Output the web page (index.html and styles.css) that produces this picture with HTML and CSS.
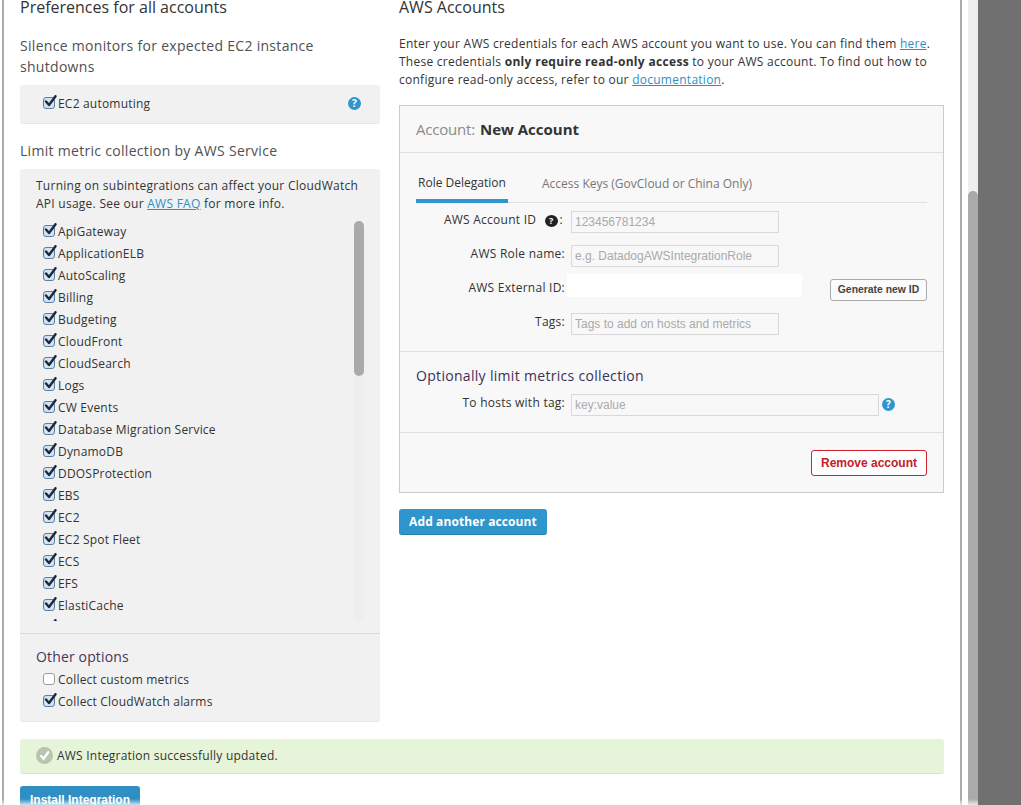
FILE: index.html
```html
<!DOCTYPE html>
<html lang="en">
<head>
<meta charset="utf-8">
<title>AWS Integration</title>
<link rel="stylesheet" href="styles.css">
</head>
<body>
<svg class="defs" width="0" height="0" aria-hidden="true">
  <symbol id="tick" viewBox="0 0 14 14">
    <path d="M3 6.5 L6 10 L12.5 1.2" fill="none" stroke="#1d2a3a" stroke-width="2.4" stroke-linecap="round" stroke-linejoin="round"/>
  </symbol>
</svg>
<div class="screen">
  <main class="modal">
    <div class="columns">
      <section class="left">
        <h2 class="title">Preferences for all accounts</h2>
        <h3 class="sub sub-first">Silence monitors for expected EC2 instance shutdowns</h3>
        <div class="panel mute">
          <label class="check"><span class="box on"><svg><use href="#tick"/></svg></span>EC2 automuting</label>
          <span class="help"><span>?</span></span>
        </div>
        <h3 class="sub sub-second">Limit metric collection by AWS Service</h3>
        <div class="panel services">
          <p class="note">Turning on subintegrations can affect your CloudWatch API usage. See our <a href="#">AWS FAQ</a> for more info.</p>
          <div class="scroller">
            <div class="list">
              <label class="check"><span class="box on"><svg><use href="#tick"/></svg></span>ApiGateway</label>
              <label class="check"><span class="box on"><svg><use href="#tick"/></svg></span>ApplicationELB</label>
              <label class="check"><span class="box on"><svg><use href="#tick"/></svg></span>AutoScaling</label>
              <label class="check"><span class="box on"><svg><use href="#tick"/></svg></span>Billing</label>
              <label class="check"><span class="box on"><svg><use href="#tick"/></svg></span>Budgeting</label>
              <label class="check"><span class="box on"><svg><use href="#tick"/></svg></span>CloudFront</label>
              <label class="check"><span class="box on"><svg><use href="#tick"/></svg></span>CloudSearch</label>
              <label class="check"><span class="box on"><svg><use href="#tick"/></svg></span>Logs</label>
              <label class="check"><span class="box on"><svg><use href="#tick"/></svg></span>CW Events</label>
              <label class="check"><span class="box on"><svg><use href="#tick"/></svg></span>Database Migration Service</label>
              <label class="check"><span class="box on"><svg><use href="#tick"/></svg></span>DynamoDB</label>
              <label class="check"><span class="box on"><svg><use href="#tick"/></svg></span>DDOSProtection</label>
              <label class="check"><span class="box on"><svg><use href="#tick"/></svg></span>EBS</label>
              <label class="check"><span class="box on"><svg><use href="#tick"/></svg></span>EC2</label>
              <label class="check"><span class="box on"><svg><use href="#tick"/></svg></span>EC2 Spot Fleet</label>
              <label class="check"><span class="box on"><svg><use href="#tick"/></svg></span>ECS</label>
              <label class="check"><span class="box on"><svg><use href="#tick"/></svg></span>EFS</label>
              <label class="check"><span class="box on"><svg><use href="#tick"/></svg></span>ElastiCache</label>
              <label class="check"><span class="box on"><svg><use href="#tick"/></svg></span>ELB</label>
            </div>
            <div class="inner-track"><div class="inner-thumb"></div></div>
          </div>
          <div class="other">
            <h4 class="other-title">Other options</h4>
            <label class="check"><span class="box"></span>Collect custom metrics</label>
            <label class="check"><span class="box on"><svg><use href="#tick"/></svg></span>Collect CloudWatch alarms</label>
          </div>
        </div>
      </section>
      <section class="right">
        <h2 class="title">AWS Accounts</h2>
        <p class="intro">Enter your AWS credentials for each AWS account you want to use. You can find them <a href="#">here</a>. These credentials <b>only require read-only access</b> to your AWS account. To find out how to configure read-only access, refer to our <a href="#">documentation</a>.</p>
        <div class="account">
          <header class="account-head"><span class="muted">Account:</span> <b>New Account</b></header>
          <div class="account-body">
            <nav class="tabs">
              <span class="tab active">Role Delegation</span>
              <span class="tab">Access Keys (GovCloud or China Only)</span>
            </nav>
            <div class="form">
              <div class="row row-id">
                <span class="lab">AWS Account ID <span class="q-dark">?</span>:</span>
                <input class="field" placeholder="123456781234">
              </div>
              <div class="row row-role">
                <span class="lab">AWS Role name:</span>
                <input class="field" placeholder="e.g. DatadogAWSIntegrationRole">
              </div>
              <div class="row row-ext">
                <span class="lab">AWS External ID:</span>
                <div class="blank"></div>
                <button class="btn-plain" type="button">Generate new ID</button>
              </div>
              <div class="row row-tags">
                <span class="lab">Tags:</span>
                <input class="field" placeholder="Tags to add on hosts and metrics">
              </div>
            </div>
          </div>
          <div class="limit">
            <h4 class="limit-title">Optionally limit metrics collection</h4>
            <div class="row">
              <span class="lab">To hosts with tag:</span>
              <input class="field wide" placeholder="key:value">
              <span class="help help-tag"><span>?</span></span>
            </div>
          </div>
          <div class="account-foot">
            <button class="btn-danger" type="button">Remove account</button>
          </div>
        </div>
        <button class="btn-primary add" type="button">Add another account</button>
      </section>
    </div>
    <div class="alert"><span class="ok"><svg viewBox="0 0 14 14"><path d="M3.5 7.5 L6 10.5 L11 3.5" fill="none" stroke="#fff" stroke-width="2.6" stroke-linecap="round"/></svg></span>AWS Integration successfully updated.</div>
    <button class="btn-install" type="button">Install Integration</button>
  </main>
  <div class="track"><div class="thumb"></div></div>
  <div class="backdrop"></div>
  <div class="fade"></div>
</div>
</body>
</html>
```
FILE: styles.css
```css
* { box-sizing: border-box; }
html, body { margin: 0; height: 100%; overflow: hidden; background: #fff; }
body { font-family: "Open Sans", "Noto Sans", sans-serif; font-size: 12px; color: #333; }
.defs { position: absolute; }

.screen { position: relative; display: flex; height: 805px; overflow: hidden; }
.modal { width: 960px; margin-left: 2px; border-left: 2px solid #aaa; border-right: 2px solid #aaa; padding: 0 16px; background: #fff; height: 805px; overflow: hidden; flex: none; }
.track { width: 10px; margin-left: 6px; background: #eee; position: relative; flex: none; display: flex; flex-direction: column; padding-top: 191px; }
.thumb { flex: 1; background: #aaa; border-radius: 5px 5px 0 0; }
.backdrop { flex: 1; background: #707070; }
.fade { position: absolute; left: 0; right: 43px; bottom: 0; height: 6px; background: linear-gradient(rgba(255,255,255,0), rgba(255,255,255,.75)); }

.columns { display: flex; gap: 19px; }
.left { width: 360px; flex: none; }
.right { width: 545px; flex: none; }

.title { margin: -6px 0 0; font-size: 16px; line-height: 26px; font-weight: 400; color: #333; }
.sub { margin: 0; font-size: 14px; line-height: 21px; font-weight: 500; color: #505050; letter-spacing: .3px; }
.sub-first { margin-top: 15px; }
.sub-second { margin-top: 16px; }

.panel { background: #f1f1f1; border-radius: 3px; border-bottom: 1px solid #e6e6e6; }
.mute { margin-top: 8px; height: 39px; padding: 0 19px 2px 23px; display: flex; align-items: center; justify-content: space-between; }
.services { margin-top: 8px; height: 553px; display: flex; flex-direction: column; }
.note { margin: 8px 16px 0; font-size: 12px; line-height: 18px; color: #333; letter-spacing: .26px; }
a { color: #2f8fc4; text-decoration: underline; }

.check { display: flex; align-items: center; height: 22px; font-size: 12px; color: #333; letter-spacing: .2px; }
.box { width: 12px; height: 12px; border: 1px solid #9d9d9d; border-radius: 3px; background: #fff; margin-right: 3px; position: relative; flex: none; }
.box.on { background: #d4e3f3; border-color: #5b7ea5; }
.box svg { position: absolute; left: -1px; top: -3px; width: 14px; height: 14px; overflow: visible; }

.scroller { position: relative; height: 400px; overflow: hidden; margin-top: 8px; padding-left: 23px; flex: none; }
.list { display: flex; flex-direction: column; margin-top: -1px; }
.inner-track { position: absolute; left: 334px; top: 0; bottom: 0; width: 10px; background: #eee; border-radius: 5px; }
.inner-thumb { height: 155px; background: #aaa; border-radius: 5px; }

.other { border-top: 1px solid #dcdcdc; margin-top: 12px; padding: 13px 0 0 23px; }
.other-title { margin: 0 0 1px -7px; font-size: 14px; line-height: 20px; font-weight: 400; color: #46365e; letter-spacing: .15px; }

.help { width: 13px; height: 13px; border-radius: 50%; background: #2f96cd; color: #fff; font: 700 10px/13px "Open Sans", sans-serif; text-align: center; display: inline-block; flex: none; }
.help-tag { margin-left: 3px; margin-bottom: 2px; }

.intro { margin: 15px 0 0; font-size: 12px; line-height: 18px; color: #333; letter-spacing: .26px; width: 540px; }
.intro b { font-weight: 700; color: #333; letter-spacing: .32px; }

.account { margin-top: 16px; height: 388px; border: 1px solid #ccc; background: #f8f8f8; display: flex; flex-direction: column; }
.account-head { height: 47px; padding: 0 16px; border-bottom: 1px solid #e0e0e0; display: flex; align-items: center; gap: 5px; font-size: 15px; }
.account-head b { font-weight: 700; color: #333; }
.muted { color: #8a8a8a; letter-spacing: -.2px; }
.account-body { height: 199px; padding: 0 16px; border-bottom: 1px solid #e0e0e0; }
.tabs { display: flex; height: 50px; border-bottom: 1px solid #e0e0e0; gap: 32px; }
.tab { display: flex; align-items: center; font-size: 12px; color: #777; padding: 10px 2px 0; height: 50px; }
.tab.active { color: #333; border-bottom: 4px solid #2f96cd; margin-bottom: -1px; width: 92px; justify-content: center; padding: 12px 0 0; }

.form { display: flex; flex-direction: column; }
.row { display: flex; align-items: center; height: 22px; }
.lab { width: 149px; flex: none; margin-bottom: 4px; line-height: 16px; text-align: right; font-size: 12px; color: #333; letter-spacing: .25px; white-space: nowrap; }
.row-id .lab { padding-right: 2px; }
.field { width: 208px; height: 22px; margin-left: 6px; border: 1px solid #d9d9d9; background: #f8f8f8; padding: 0 3px; font: 12px "Liberation Sans", sans-serif; color: #333; outline: none; }
.field::placeholder { color: #aaa; opacity: 1; }
.wide { width: 308px; }
.row-id { margin-top: 8px; }
.row-role { margin-top: 12px; }
.row-ext { margin-top: 7px; align-items: flex-start; height: 28px; }
.row-ext .lab { margin: 6px 0 0; }
.row-tags { margin-top: 11px; }
.blank { width: 235px; height: 23px; background: #fff; margin-left: 2px; }
.btn-plain { margin-left: 28px; margin-top: 5px; width: 97px; height: 22px; border: 1px solid #aaa; border-radius: 3px; background: #fbfbfb; color: #444; font: 700 10.4px "Liberation Sans", sans-serif; padding: 0 0 2px; }
.q-dark { display: inline-block; width: 13px; height: 12px; margin: 0 2px 0 5px; border-radius: 50%; background: #222; color: #fff; font: 700 9px/12px "Open Sans", sans-serif; text-align: center; letter-spacing: 0; }

.limit { height: 81px; padding: 14px 16px 0; border-bottom: 1px solid #e0e0e0; }
.limit-title { margin: 0 0 8px; font-size: 14px; line-height: 20px; font-weight: 400; color: #3a3058; letter-spacing: .31px; }
.account-foot { flex: 1; padding: 17px 16px 0; display: flex; justify-content: flex-end; align-items: flex-start; }
.btn-danger { width: 116px; height: 26px; border: 1px solid #d3212d; border-radius: 3px; background: #fff; color: #c4202a; font: 700 12px "Liberation Sans", sans-serif; padding: 0; }
.btn-primary { display: block; height: 26px; width: 148px; border: 0; border-bottom: 1px solid #2580b0; border-radius: 3px; background: #2f96cd; color: #fff; font: 700 12px "Open Sans", sans-serif; letter-spacing: .1px; padding: 0; }
.add { margin-top: 16px; }

.alert { margin-top: 17px; height: 35px; width: 924px; background: #e6f4d9; border-bottom: 1px solid #d5e8c4; border-radius: 3px; display: flex; align-items: center; padding: 0 0 2px 16px; font-size: 12px; color: #333; letter-spacing: .22px; }
.ok { width: 17px; height: 17px; border-radius: 50%; background: #b9c4ae; margin-right: 4px; display: flex; flex: none; align-items: center; justify-content: center; }
.ok svg { width: 13px; height: 13px; }
.btn-install { display: block; margin-top: 12px; width: 120px; height: 30px; border: 0; border-radius: 3px; background: #2f8fc2; color: #fff; font: 700 12px "Liberation Sans", sans-serif; padding: 0 0 3px; }
```
